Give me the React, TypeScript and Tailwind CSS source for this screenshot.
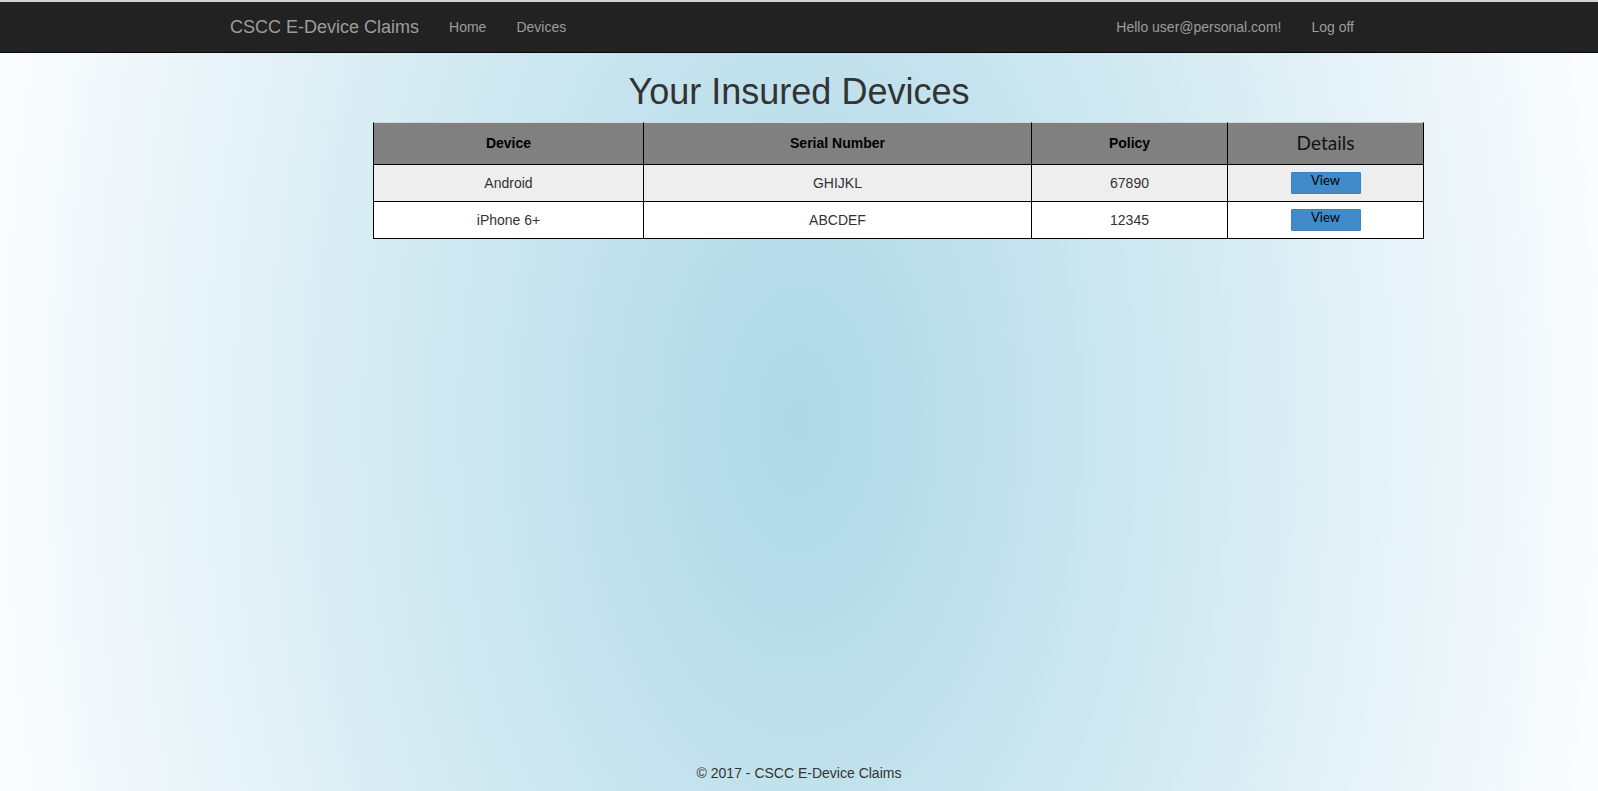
import React from 'react';

const devices = [
  { name: 'Android', serial: 'GHIJKL', policy: '67890' },
  { name: 'iPhone 6+', serial: 'ABCDEF', policy: '12345' },
];

export default function App() {
  return (
    <div className="min-h-screen flex flex-col font-['Liberation_Sans',Arial,sans-serif] text-[14px] text-[#333] bg-[radial-gradient(ellipse_810px_1400px_at_50%_420px,#add8e6,#fafcfe)]">
      <div className="h-[2px] bg-[#d4d4d4]" />
      <nav className="h-[51px] bg-[#222] border-b border-[#080808]">
        <div className="w-[1170px] mx-auto h-full flex items-center justify-between">
          <div className="flex items-center">
            <a className="pl-[16px] pr-[15px] text-[18px] text-[#9d9d9d]">CSCC E-Device Claims</a>
            <a className="px-[15px] text-[#9d9d9d]">Home</a>
            <a className="px-[15px] text-[#9d9d9d]">Devices</a>
          </div>
          <div className="flex items-center mr-[15px]">
            <a className="px-[15px] text-[#9d9d9d]">Hello user@personal.com!</a>
            <a className="px-[15px] text-[#9d9d9d]">Log off</a>
          </div>
        </div>
      </nav>

      <h1 className="mt-[22px] h-[34px] leading-[34px] text-center text-[36px] font-normal text-[#333]">
        Your Insured Devices
      </h1>

      <div className="ml-[373px] mt-[13px] w-[1051px]">
        <table className="w-full border-separate border-spacing-0 table-fixed">
          <colgroup>
            <col className="w-[271px]" />
            <col className="w-[388px]" />
            <col className="w-[196px]" />
            <col className="w-[196px]" />
          </colgroup>
          <thead>
            <tr className="h-[43px] bg-[#808080]">
              <th className="h-[43px] border-t border-t-[#d8d8d8] border-l border-r border-b border-black font-bold text-black">Device</th>
              <th className="border-t border-t-[#d8d8d8] border-r border-b border-black font-bold text-black">Serial Number</th>
              <th className="border-t border-t-[#d8d8d8] border-r border-b border-black font-bold text-black">Policy</th>
              <th className="border-t border-t-[#d8d8d8] border-r border-b border-black font-normal text-[19px] text-[#111] font-['Lato',sans-serif]">Details</th>
            </tr>
          </thead>
          <tbody>
            {devices.map((d, i) => (
              <tr key={d.serial} className={`h-[37px] ${i === 0 ? 'bg-[#eeeeee]' : 'bg-white'}`}>
                <td className="border-l border-r border-b border-black text-center">{d.name}</td>
                <td className="border-r border-b border-black text-center">{d.serial}</td>
                <td className="border-r border-b border-black text-center">{d.policy}</td>
                <td className="border-r border-b border-black text-center">
                  <button className="inline-flex items-center justify-center w-[70px] h-[22px] pb-[3px] mb-[2px] bg-[#428bca] border border-[#3d82bf] rounded-[1px] text-black text-[13px] font-['Lato',sans-serif]">
                    View
                  </button>
                </td>
              </tr>
            ))}
          </tbody>
        </table>
      </div>

      <footer className="mt-auto pb-[8px] text-center leading-[20px] text-[#333]">
        © 2017 - CSCC E-Device Claims
      </footer>
    </div>
  );
}
